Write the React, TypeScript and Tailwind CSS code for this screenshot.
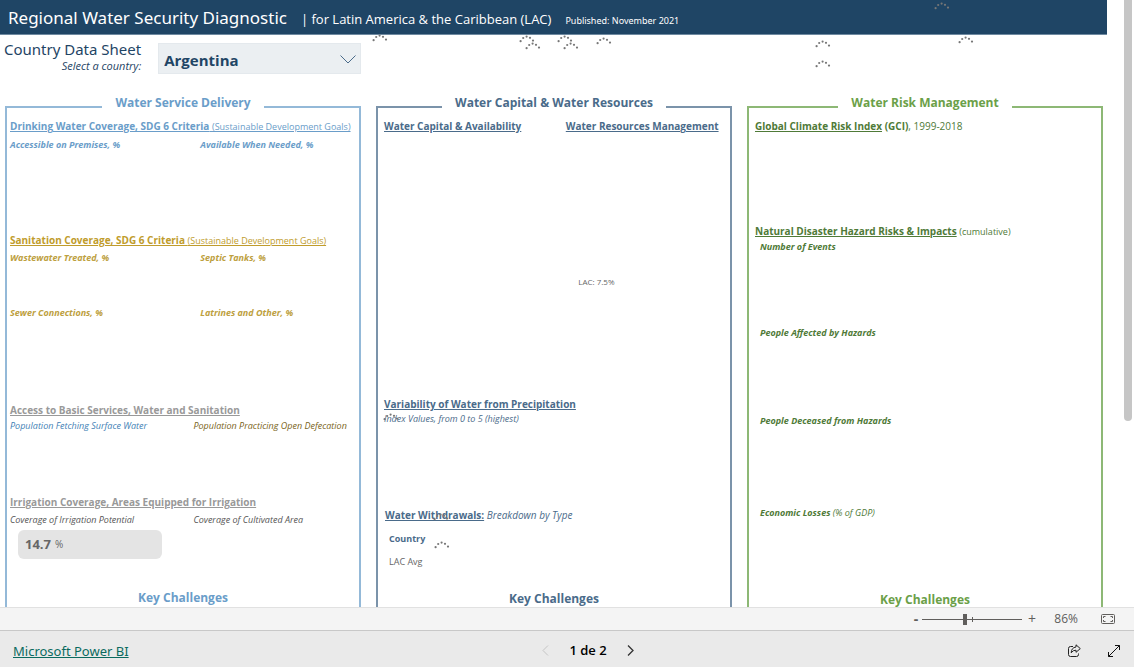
import { useState } from "react";
import type { ReactNode } from "react";
import clsx from "clsx";

// Loading spinners of the visuals that have not rendered yet
const SPINNERS = [
  { x: 934, y: 2 },
  { x: 372, y: 34 },
  { x: 519, y: 35 },
  { x: 525, y: 42 },
  { x: 557, y: 35 },
  { x: 563, y: 42 },
  { x: 596, y: 37 },
  { x: 815, y: 40 },
  { x: 815, y: 60 },
  { x: 958, y: 36 },
  { x: 383, y: 413 },
  { x: 433, y: 513 },
  { x: 434, y: 541 },
];

const COUNTRIES = ["Argentina", "Bolivia", "Brazil", "Chile", "Colombia"];

function Spinner({ x, y }: { x: number; y: number }) {
  return (
    <svg className="absolute" style={{ left: x, top: y }} width="16" height="8" viewBox="0 0 16 8" fill="#777" aria-hidden="true">
      <circle cx="1.6" cy="6.2" r="1.1" />
      <circle cx="4.2" cy="3" r="1.1" />
      <circle cx="7.6" cy="1.6" r="1.1" />
      <circle cx="11" cy="2.8" r="1.1" />
      <circle cx="14" cy="5.6" r="1.1" />
    </svg>
  );
}

function Panel({ title, line, text, children }: { title: string; line: string; text: string; children: ReactNode }) {
  return (
    <section className="flex min-w-0 flex-col">
      <header className="flex items-end">
        <span className={clsx("h-[6px] flex-1 border-t-2 border-l-2", line)} />
        <h2 className={clsx("px-[13px] text-[12px] leading-[18px] font-bold", text)}>{title}</h2>
        <span className={clsx("h-[6px] flex-1 border-t-2 border-r-2", line)} />
      </header>
      <div className={clsx("flex-1 border-x-2 px-[3px] pt-[6px]", line)}>
        {children}
        <h2 className={clsx("pt-px text-center text-[12px] leading-5 font-bold", text)}>Key Challenges</h2>
      </div>
    </section>
  );
}

function Heading({ children, className }: { children: ReactNode; className?: string }) {
  return <h3 className={clsx("text-[10px] leading-4 whitespace-nowrap", className)}>{children}</h3>;
}

function Sub({ children, className }: { children: ReactNode; className?: string }) {
  return <p className={clsx("text-[9px] leading-[14px] whitespace-nowrap italic", className)}>{children}</p>;
}

function ServiceDelivery() {
  return (
    <Panel title="Water Service Delivery" line="border-[#94b9d8]" text="text-[#6a9dc9]">
      <Heading className="text-[#6a9dc9] underline">
        <b>Drinking Water Coverage, SDG 6 Criteria</b> <span className="text-[9px]">(Sustainable Development Goals)</span>
      </Heading>
      <div className="mt-[3px] grid h-[94px] grid-cols-[11fr_9fr] font-bold text-[#6a9dc9]">
        <Sub>Accessible on Premises, %</Sub>
        <Sub>Available When Needed, %</Sub>
      </div>
      <Heading className="text-[#c09c2c] underline">
        <b>Sanitation Coverage, SDG 6 Criteria</b> <span className="text-[9px]">(Sustainable Development Goals)</span>
      </Heading>
      <div className="mt-[2px] grid h-[55px] grid-cols-[11fr_9fr] font-bold text-[#bda040]">
        <Sub>Wastewater Treated, %</Sub>
        <Sub>Septic Tanks, %</Sub>
      </div>
      <div className="grid h-24 grid-cols-[11fr_9fr] font-bold text-[#bda040]">
        <Sub>Sewer Connections, %</Sub>
        <Sub>Latrines and Other, %</Sub>
      </div>
      <Heading className="font-bold text-[#999] underline">Access to Basic Services, Water and Sanitation</Heading>
      <div className="mt-px grid h-[75px] grid-cols-[53fr_47fr]">
        <Sub className="text-[#3f7fb5]">Population Fetching Surface Water</Sub>
        <Sub className="text-[#7a6420]">Population Practicing Open Defecation</Sub>
      </div>
      <Heading className="font-bold text-[#999] underline">Irrigation Coverage, Areas Equipped for Irrigation</Heading>
      <div className="mt-[3px] grid grid-cols-[53fr_47fr] text-[#555]">
        <Sub>Coverage of Irrigation Potential</Sub>
        <Sub>Coverage of Cultivated Area</Sub>
      </div>
      <div className="mt-[3px] mb-7 ml-2 flex h-[29px] w-5/12 items-center gap-1 rounded-md bg-[#e4e4e4] px-[7px] text-[#666]">
        <strong className="text-[13px]">14.7</strong>
        <span className="text-[10px]">%</span>
      </div>
    </Panel>
  );
}

function CapitalResources() {
  return (
    <Panel title="Water Capital & Water Resources" line="border-[#7b93aa]" text="text-[#4a6b8a]">
      <div className="grid h-[156px] grid-cols-[53fr_47fr] pl-[3px] font-bold text-[#4a6b8a] underline">
        <Heading>Water Capital &amp; Availability</Heading>
        <Heading>Water Resources Management</Heading>
      </div>
      <div className="grid h-[122px] grid-cols-[57fr_43fr]">
        <p className="col-start-2 text-[8px] leading-4 text-[#666]">LAC: 7.5%</p>
      </div>
      <div className="h-[111px] pl-[3px] text-[#4a6b8a]">
        <Heading className="font-bold underline">Variability of Water from Precipitation</Heading>
        <Sub>Index Values, from 0 to 5 (highest)</Sub>
      </div>
      <div className="pl-1 text-[#4a6b8a]">
        <Heading>
          <b className="underline">Water Withdrawals:</b> <i>Breakdown by Type</i>
        </Heading>
      </div>
      <dl className="mt-2 mb-[18px] space-y-[7px] pl-2 text-[9px] leading-4">
        <dt className="font-bold text-[#4a6b8a]">Country</dt>
        <dt className="text-[#666]">LAC Avg</dt>
      </dl>
    </Panel>
  );
}

function RiskManagement() {
  return (
    <Panel title="Water Risk Management" line="border-[#8db875]" text="text-[#6ba048]">
      <div className="h-[105px] pl-[3px] text-[#4f7a38]">
        <Heading>
          <b className="underline">Global Climate Risk Index</b> <b>(GCI)</b>, 1999-2018
        </Heading>
      </div>
      <div className="pl-[3px] text-[#4f7a38]">
        <Heading>
          <b className="underline">Natural Disaster Hazard Risks &amp; Impacts</b> <span className="text-[9px]">(cumulative)</span>
        </Heading>
      </div>
      <div className="pl-2 text-[#4f7a38]">
        <div className="h-[86px]">
          <Sub className="font-bold">Number of Events</Sub>
        </div>
        <div className="h-[88px]">
          <Sub className="font-bold">People Affected by Hazards</Sub>
        </div>
        <div className="h-[92px]">
          <Sub className="font-bold">People Deceased from Hazards</Sub>
        </div>
        <div className="h-[83px]">
          <Sub>
            <b>Economic Losses</b> (% of GDP)
          </Sub>
        </div>
      </div>
    </Panel>
  );
}

export default function App() {
  const [country, setCountry] = useState("Argentina");
  const [zoom, setZoom] = useState(86);
  const [page, setPage] = useState(1);

  return (
    <div className="flex h-screen flex-col bg-white font-['Open_Sans','Noto_Sans',sans-serif]">
      <main className="flex min-h-0 flex-1 overflow-hidden">
        <div className="relative flex min-w-0 flex-1 flex-col">
          <header className="flex h-[35px] shrink-0 items-baseline border-b border-[#6f8aa1] bg-[#1f4565] pl-2 leading-9 whitespace-nowrap text-white">
            <h1 className="font-['Noto_Sans',sans-serif] text-[17px]">Regional Water Security Diagnostic</h1>
            <span className="ml-3.5 text-[13px]">| for Latin America &amp; the Caribbean (LAC)</span>
            <span className="ml-3.5 font-['Noto_Sans',sans-serif] text-[9px]">Published: November 2021</span>
          </header>
          <div className="flex h-[59px] shrink-0 items-start gap-[17px] pt-1.5 pl-1">
            <div className="text-right text-[#1f4565]">
              <p className="font-['Noto_Sans',sans-serif] text-[15px] leading-4">Country Data Sheet</p>
              <label htmlFor="country" className="block text-[11px] leading-[18px] italic">
                Select a country:
              </label>
            </div>
            <div className="relative mt-0.5 w-[203px]">
              <select
                id="country"
                value={country}
                onChange={(e) => setCountry(e.target.value)}
                className="h-[31px] w-full appearance-none border border-[#e4e9ed] bg-[#ebeff2] px-[5px] pt-[3px] text-[15px] font-bold text-[#1f4565]"
              >
                {COUNTRIES.map((name) => (
                  <option key={name}>{name}</option>
                ))}
              </select>
              <svg className="pointer-events-none absolute top-3 right-[5px]" width="16" height="9" viewBox="0 0 16 9" fill="none" stroke="#4a6b8a" aria-hidden="true">
                <path d="M0.5 0.5L8 8L15.5 0.5" />
              </svg>
            </div>
          </div>
          <div className="grid flex-1 grid-cols-3 gap-[15px] pr-1 pl-[5px]">
            <ServiceDelivery />
            <CapitalResources />
            <RiskManagement />
          </div>
          {SPINNERS.map((s) => (
            <Spinner key={`${s.x}-${s.y}`} x={s.x} y={s.y} />
          ))}
        </div>
        <div className="flex w-[27px] shrink-0 justify-end pr-[2px]">
          <div className="-mt-1 h-[70%] w-2 rounded-full bg-[#c6c6c6]" />
        </div>
      </main>

      <div className="flex h-[23px] shrink-0 items-center justify-end border-t border-[#e1e1e1] bg-[#f4f4f4] pr-[19px] text-[#605e5c]">
        <button type="button" aria-label="Zoom out" onClick={() => setZoom((v) => Math.max(10, v - 10))} className="w-3 text-sm leading-5 font-bold">
          -
        </button>
        <div className="relative flex w-[100px] items-center">
          <span className="absolute left-1/2 h-[5px] w-px bg-[#605e5c]" />
          <input
            type="range"
            aria-label="Zoom"
            min={0}
            max={200}
            value={zoom}
            onChange={(e) => setZoom(Number(e.target.value))}
            className="h-3 w-full appearance-none bg-transparent [&::-webkit-slider-runnable-track]:h-px [&::-webkit-slider-runnable-track]:bg-[#605e5c] [&::-webkit-slider-thumb]:-mt-[5px] [&::-webkit-slider-thumb]:h-[11px] [&::-webkit-slider-thumb]:w-1 [&::-webkit-slider-thumb]:appearance-none [&::-webkit-slider-thumb]:bg-[#605e5c]"
          />
        </div>
        <button type="button" aria-label="Zoom in" onClick={() => setZoom((v) => Math.min(200, v + 10))} className="w-5 text-sm leading-5">
          +
        </button>
        <span className="w-9 text-right text-xs">{zoom}%</span>
        <button type="button" aria-label="Fit to page" className="ml-[23px]">
          <svg width="14" height="10" viewBox="0 0 14 10" fill="none" stroke="#605e5c" aria-hidden="true">
            <rect x="0.5" y="0.5" width="13" height="9" rx="1" />
            <path d="M4.5 2.5H2.5V4M2.5 6V7.5H4.5M9.5 2.5H11.5V4M11.5 6V7.5H9.5" />
          </svg>
        </button>
      </div>

      <footer className="grid h-[37px] shrink-0 grid-cols-3 items-center border-t border-[#c8c8c8] bg-[#eaeaea] px-[13px] pt-[3px]">
        <a href="https://powerbi.microsoft.com" className="justify-self-start pt-0.5 font-['Noto_Sans',sans-serif] text-[13px] text-[#0b6a5f] underline">
          Microsoft Power BI
        </a>
        <nav className="flex items-center justify-center gap-5 pl-[42px] text-[13px] font-semibold text-black">
          <button type="button" aria-label="Previous page" disabled={page === 1} onClick={() => setPage(1)} className="text-[#333] disabled:text-[#c4c4c4]">
            <svg width="7" height="11" viewBox="0 0 7 11" fill="none" stroke="currentColor" aria-hidden="true">
              <path d="M6 0.5L1 5.5L6 10.5" />
            </svg>
          </button>
          <span>{page} de 2</span>
          <button type="button" aria-label="Next page" disabled={page === 2} onClick={() => setPage(2)} className="text-[#333] disabled:text-[#c4c4c4]">
            <svg width="7" height="11" viewBox="0 0 7 11" fill="none" stroke="currentColor" strokeWidth="1.3" aria-hidden="true">
              <path d="M1 0.5L6 5.5L1 10.5" />
            </svg>
          </button>
        </nav>
        <div className="flex items-center justify-end gap-[27px]">
          <button type="button" aria-label="Share">
            <svg width="13" height="13" viewBox="0 0 13 13" fill="none" stroke="#222" strokeLinejoin="round" aria-hidden="true">
              <path d="M5 2.5H2.5Q0.5 2.5 0.5 4.5V10.5Q0.5 12.5 2.5 12.5H8.5Q10.5 12.5 10.5 10.5V9.5" />
              <path d="M8 0.8L12.3 4.6L8 8.3V6.2Q5 6 3.2 8.8Q3.4 3.6 8 3Z" />
            </svg>
          </button>
          <button type="button" aria-label="Full screen" className="mr-px">
            <svg width="12" height="12" viewBox="0 0 12 12" fill="none" stroke="#111" aria-hidden="true">
              <path d="M7 0.5H11.5V5M0.5 7V11.5H5M11.5 0.5L0.5 11.5" />
            </svg>
          </button>
        </div>
      </footer>
    </div>
  );
}
